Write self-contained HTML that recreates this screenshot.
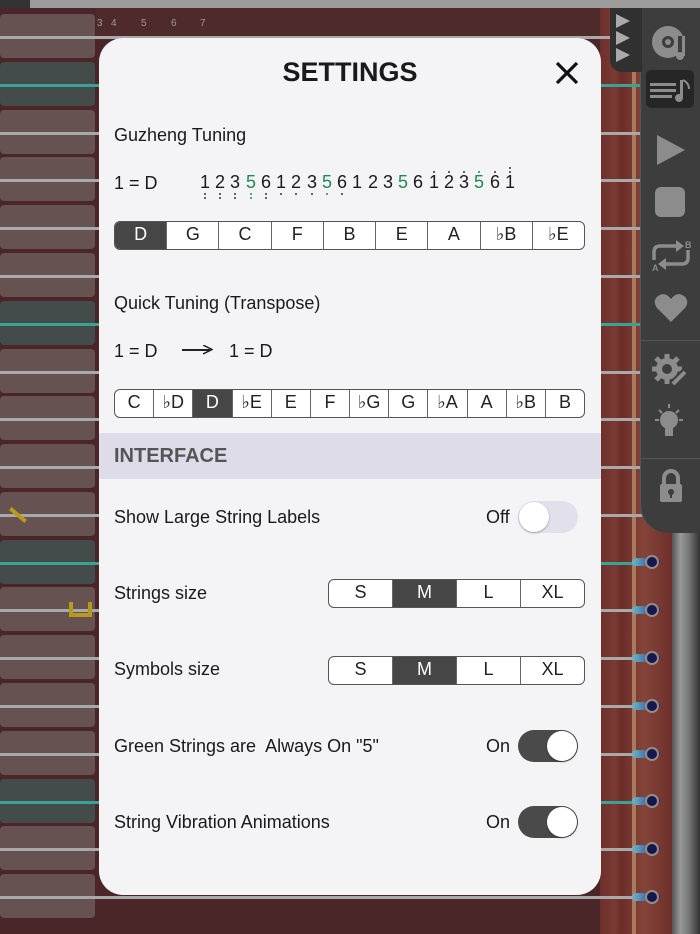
<!DOCTYPE html>
<html><head><meta charset="utf-8"><style>
*{margin:0;padding:0;box-sizing:border-box}
body{width:700px;height:934px;overflow:hidden;position:relative;background:#4a2628;font-family:"Liberation Sans",sans-serif;color:#1a1a1a}
.a{position:absolute}
.blk{position:absolute;left:0;width:95px;height:44px;border-radius:4px;background:#665251}
.blk.t{background:#434c4b}
.s{position:absolute;left:0;width:672px;height:3px;background:#a9a9a9}
.s.t{background:#3aa396}
.peg{position:absolute;left:632px;width:28px;height:8px;border-radius:4px;background:linear-gradient(90deg,#6bb8c8,#1d2a8a)}
.pc{position:absolute;left:645px;width:14px;height:14px;border-radius:7px;border:2px solid #9a8a80;background:#101850}
.modal{position:absolute;left:99px;top:38px;width:502px;height:857px;background:#f4f4f6;border-radius:24px;overflow:hidden}
.seg{position:absolute;display:flex;border:1.5px solid #555;border-radius:6px;overflow:hidden;background:#fff}
.seg div{flex:1;text-align:center;border-left:1px solid #666;font-size:18px;line-height:25px;color:#222}
.seg div:first-child{border-left:none}
.seg div.on{background:#464646;color:#fff}
.lbl{position:absolute;left:15px;font-size:18px}
.tg{position:absolute;left:419px;width:60px;height:32px;border-radius:16px}
.tg i{position:absolute;top:1px;width:30px;height:30px;border-radius:15px;background:#fff;box-shadow:0 1px 2px rgba(0,0,0,.3)}
.ot{position:absolute;left:387px;font-size:18px}
.jp{position:absolute;top:134px;font-size:18px;width:14px;text-align:center}
.jp b{position:absolute;left:6px;width:2px;height:2px;background:#333;border-radius:1px}
.g{color:#1f8a55}
.ic{position:absolute;fill:#8c8c8c}
</style></head><body>
<div class="a" style="left:0;top:0;width:30px;height:8px;background:#333"></div>
<div class="a" style="left:30px;top:0;width:670px;height:8px;background:#9b9b9b"></div>
<div class="a" style="left:96px;top:8px;width:504px;height:28px;background:#4e2a2b;color:#999;font-size:10px">
<span class="a" style="left:1px;top:10px">3</span><span class="a" style="left:15px;top:10px">4</span><span class="a" style="left:45px;top:10px">5</span><span class="a" style="left:75px;top:10px">6</span><span class="a" style="left:104px;top:10px">7</span></div>
<div class="a" style="left:600px;top:8px;width:72px;height:926px;background:linear-gradient(90deg,#6e2e2a,#7a3a33 20%,#6b2d29 30%,#85443a 60%,#6e302b)"></div>
<div class="a" style="left:632px;top:8px;width:4px;height:926px;background:#a87c5a"></div>
<div class="a" style="left:672px;top:520px;width:28px;height:414px;background:linear-gradient(90deg,#555,#999 30%,#777 60%,#333)"></div>

<div class="blk" style="top:14px"></div><div class="blk t" style="top:62px"></div><div class="blk" style="top:110px"></div><div class="blk" style="top:157px"></div><div class="blk" style="top:205px"></div><div class="blk" style="top:253px"></div><div class="blk t" style="top:301px"></div><div class="blk" style="top:349px"></div><div class="blk" style="top:396px"></div><div class="blk" style="top:444px"></div><div class="blk" style="top:492px"></div><div class="blk t" style="top:540px"></div><div class="blk" style="top:587px"></div><div class="blk" style="top:635px"></div><div class="blk" style="top:683px"></div><div class="blk" style="top:731px"></div><div class="blk t" style="top:779px"></div><div class="blk" style="top:826px"></div><div class="blk" style="top:874px"></div>

<div class="s" style="top:36px"></div><div class="s t" style="top:84px"></div><div class="s" style="top:132px"></div><div class="s" style="top:179px"></div><div class="s" style="top:227px"></div><div class="s" style="top:275px"></div><div class="s t" style="top:323px"></div><div class="s" style="top:371px"></div><div class="s" style="top:418px"></div><div class="s" style="top:466px"></div><div class="s" style="top:514px"></div><div class="s t" style="top:562px;width:636px"></div><div class="s" style="top:609px;width:636px"></div><div class="s" style="top:657px;width:636px"></div><div class="s" style="top:705px;width:636px"></div><div class="s" style="top:753px;width:636px"></div><div class="s t" style="top:801px;width:636px"></div><div class="s" style="top:848px;width:636px"></div><div class="s" style="top:896px;width:636px"></div>
<div class="peg" style="top:558px"></div><div class="peg" style="top:606px"></div><div class="peg" style="top:654px"></div><div class="peg" style="top:702px"></div><div class="peg" style="top:750px"></div><div class="peg" style="top:797px"></div><div class="peg" style="top:845px"></div><div class="peg" style="top:893px"></div>
<div class="pc" style="top:555px"></div><div class="pc" style="top:603px"></div><div class="pc" style="top:651px"></div><div class="pc" style="top:699px"></div><div class="pc" style="top:747px"></div><div class="pc" style="top:794px"></div><div class="pc" style="top:842px"></div><div class="pc" style="top:890px"></div>
<div class="a" style="left:8px;top:513px;width:20px;height:4px;background:#b89a18;transform:rotate(40deg)"></div>
<div class="a" style="left:69px;top:602px;width:23px;height:15px;border:4px solid #b89a18;border-top:none"></div>

<!-- toolbar -->
<div class="a" style="left:640px;top:8px;width:60px;height:525px;background:#3d3d3d;border-bottom-left-radius:28px;border-left:1px solid #555"></div>
<div class="a" style="left:610px;top:8px;width:32px;height:64px;background:#303030;border-bottom-left-radius:12px"></div>
<svg class="a" style="left:614px;top:12px" width="20" height="52"><g fill="#aaa"><path d="M2 2L16 9L2 16Z"/><path d="M2 19L16 26L2 33Z"/><path d="M2 36L16 43L2 50Z"/></g></svg>
<div class="a" style="left:646px;top:70px;width:48px;height:38px;background:#262626;border-radius:5px"></div>
<svg class="ic" style="left:648px;top:22px" width="44" height="40"><circle cx="20" cy="20" r="16"/><circle cx="20" cy="20" r="6" fill="#3d3d3d"/><circle cx="20" cy="20" r="3"/><rect x="30" y="14" width="10" height="24" fill="#3d3d3d"/><rect x="34" y="14" width="3" height="20"/><circle cx="32" cy="34" r="4"/></svg>
<svg class="ic" style="left:650px;top:78px" width="42" height="26"><rect x="0" y="5" width="26" height="3"/><rect x="0" y="11" width="26" height="3"/><rect x="0" y="17" width="22" height="3"/><rect x="30" y="2" width="3" height="18"/><circle cx="29" cy="20" r="4"/><path d="M33 2q6 3 6 9" stroke="#8c8c8c" stroke-width="2" fill="none"/></svg>
<svg class="ic" style="left:655px;top:133px" width="32" height="34"><path d="M2 2L30 17L2 32Z"/></svg>
<svg class="ic" style="left:654px;top:186px" width="32" height="32"><rect x="1" y="1" width="30" height="30" rx="6"/></svg>
<svg class="ic" style="left:650px;top:238px" width="42" height="34"><path d="M4 22v-8q0-6 6-6h18" stroke="#8c8c8c" stroke-width="3.5" fill="none"/><path d="M26 2l8 6l-8 6z"/><path d="M38 12v8q0 6-6 6h-18" stroke="#8c8c8c" stroke-width="3.5" fill="none"/><path d="M16 20l-8 6l8 6z"/><text x="2" y="33" font-size="9" font-weight="bold" fill="#8c8c8c" font-family="Liberation Sans">A</text><text x="35" y="10" font-size="9" font-weight="bold" fill="#8c8c8c" font-family="Liberation Sans">B</text></svg>
<svg class="ic" style="left:654px;top:292px" width="34" height="32"><path d="M17 30L3 16Q-2 9 4 4Q11 -1 17 7Q23 -1 30 4Q36 9 31 16Z"/></svg>
<div class="a" style="left:640px;top:340px;width:60px;height:1px;background:#555"></div>
<svg class="ic" style="left:651px;top:352px" width="40" height="36"><circle cx="16" cy="17" r="11"/><g stroke="#8c8c8c" stroke-width="5"><path d="M16 2v30M1 17h30M5 6l22 22M27 6L5 28"/></g><circle cx="16" cy="17" r="5" fill="#3d3d3d"/><path d="M22 32l12-12" stroke="#3d3d3d" stroke-width="8"/><path d="M22 32l12-12" stroke="#8c8c8c" stroke-width="4"/></svg>
<svg class="ic" style="left:651px;top:402px" width="40" height="42"><circle cx="18" cy="18" r="9"/><rect x="14" y="26" width="8" height="8"/><g stroke="#8c8c8c" stroke-width="2"><path d="M18 2v4M4 18h4M28 18h4M8 8l3 3M28 8l-3 3"/></g></svg>
<div class="a" style="left:640px;top:458px;width:60px;height:1px;background:#555"></div>
<svg class="ic" style="left:658px;top:468px" width="26" height="36"><path d="M6 17v-7a7 7 0 0 1 14 0v7" stroke="#8c8c8c" stroke-width="4" fill="none"/><rect x="2" y="16" width="22" height="18" rx="2"/><circle cx="13" cy="24" r="3" fill="#3d3d3d"/><rect x="12" y="25" width="2" height="5" fill="#3d3d3d"/></svg>

<div class="modal">
<div class="a" style="left:0;width:502px;top:19px;text-align:center;font-size:27px;font-weight:bold">SETTINGS</div>
<svg class="a" style="left:456px;top:23px" width="24" height="24"><path d="M2 2L22 22M22 2L2 22" stroke="#111" stroke-width="3.2"/></svg>
<div class="lbl" style="top:87px">Guzheng Tuning</div>
<div class="lbl" style="top:135px">1 = D</div>
<div class="jp" style="left:99px">1<b style="top:21px"></b><b style="top:25px"></b></div>
<div class="jp" style="left:114px">2<b style="top:21px"></b><b style="top:25px"></b></div>
<div class="jp" style="left:129px">3<b style="top:21px"></b><b style="top:25px"></b></div>
<div class="jp g" style="left:145px">5<b style="top:21px;background:#1f8a55"></b><b style="top:25px;background:#1f8a55"></b></div>
<div class="jp" style="left:160px">6<b style="top:21px"></b><b style="top:25px"></b></div>
<div class="jp" style="left:175px">1<b style="top:21px"></b></div>
<div class="jp" style="left:190px">2<b style="top:21px"></b></div>
<div class="jp" style="left:206px">3<b style="top:21px"></b></div>
<div class="jp g" style="left:221px">5<b style="top:21px;background:#1f8a55"></b></div>
<div class="jp" style="left:236px">6<b style="top:21px"></b></div>
<div class="jp" style="left:251px">1</div>
<div class="jp" style="left:267px">2</div>
<div class="jp" style="left:282px">3</div>
<div class="jp g" style="left:297px">5</div>
<div class="jp" style="left:312px">6</div>
<div class="jp" style="left:328px">1<b style="top:-1px"></b></div>
<div class="jp" style="left:343px">2<b style="top:-1px"></b></div>
<div class="jp" style="left:358px">3<b style="top:-1px"></b></div>
<div class="jp g" style="left:373px">5<b style="top:-1px;background:#1f8a55"></b></div>
<div class="jp" style="left:389px">6<b style="top:-1px"></b></div>
<div class="jp" style="left:404px">1<b style="top:-1px"></b><b style="top:-5px"></b></div>

<div class="seg" style="left:15px;top:183px;width:471px;height:29px"><div class="on">D</div><div>G</div><div>C</div><div>F</div><div>B</div><div>E</div><div>A</div><div>♭B</div><div>♭E</div></div>
<div class="lbl" style="top:255px">Quick Tuning (Transpose)</div>
<div class="lbl" style="top:303px">1 = D</div>
<div class="a" style="left:83px;top:311px;width:28px;height:1.5px;background:#222"></div>
<svg class="a" style="left:104px;top:307px" width="10" height="10"><path d="M0 0L9 4.5L0 9" stroke="#222" stroke-width="1.5" fill="none"/></svg>
<div class="lbl" style="left:130px;top:303px">1 = D</div>
<div class="seg" style="left:15px;top:351px;width:471px;height:29px"><div>C</div><div>♭D</div><div class="on">D</div><div>♭E</div><div>E</div><div>F</div><div>♭G</div><div>G</div><div>♭A</div><div>A</div><div>♭B</div><div>B</div></div>

<div class="a" style="left:0;top:395px;width:502px;height:46px;background:#dedce8"></div>
<div class="a" style="left:15px;top:407px;font-size:20px;font-weight:bold;color:#555">INTERFACE</div>

<div class="lbl" style="top:469px">Show Large String Labels</div>
<div class="ot" style="top:469px">Off</div>
<div class="tg" style="top:463px;background:#e2e0ea"><i style="left:1px"></i></div>

<div class="lbl" style="top:545px">Strings size</div>
<div class="seg" style="left:229px;top:541px;width:257px;height:29px"><div>S</div><div class="on">M</div><div>L</div><div>XL</div></div>
<div class="lbl" style="top:621px">Symbols size</div>
<div class="seg" style="left:229px;top:618px;width:257px;height:29px"><div>S</div><div class="on">M</div><div>L</div><div>XL</div></div>

<div class="lbl" style="top:698px">Green Strings are&nbsp; Always On "5"</div>
<div class="ot" style="top:698px">On</div>
<div class="tg" style="top:692px;background:#4a4a4a"><i style="left:29px"></i></div>
<div class="lbl" style="top:774px">String Vibration Animations</div>
<div class="ot" style="top:774px">On</div>
<div class="tg" style="top:768px;background:#4a4a4a"><i style="left:29px"></i></div>
</div>
</body></html>
